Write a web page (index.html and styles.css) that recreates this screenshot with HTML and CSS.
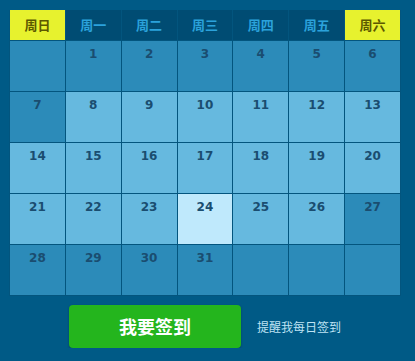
FILE: index.html
```html
<!DOCTYPE html>
<html lang="zh-CN">
<head>
  <meta charset="UTF-8">
  <title>每日签到</title>
  <link rel="stylesheet" href="styles.css">
</head>
<body>
  <div class="sign-panel">
    <table class="calendar">
      <thead>
        <tr>
          <th class="weekend">周日</th>
          <th>周一</th>
          <th>周二</th>
          <th>周三</th>
          <th>周四</th>
          <th>周五</th>
          <th class="weekend">周六</th>
        </tr>
      </thead>
      <tbody>
        <tr>
          <td></td>
          <td>1</td>
          <td>2</td>
          <td>3</td>
          <td>4</td>
          <td>5</td>
          <td>6</td>
        </tr>
        <tr>
          <td>7</td>
          <td class="signed">8</td>
          <td class="signed">9</td>
          <td class="signed">10</td>
          <td class="signed">11</td>
          <td class="signed">12</td>
          <td class="signed">13</td>
        </tr>
        <tr>
          <td class="signed">14</td>
          <td class="signed">15</td>
          <td class="signed">16</td>
          <td class="signed">17</td>
          <td class="signed">18</td>
          <td class="signed">19</td>
          <td class="signed">20</td>
        </tr>
        <tr>
          <td class="signed">21</td>
          <td class="signed">22</td>
          <td class="signed">23</td>
          <td class="today">24</td>
          <td class="signed">25</td>
          <td class="signed">26</td>
          <td>27</td>
        </tr>
        <tr>
          <td>28</td>
          <td>29</td>
          <td>30</td>
          <td>31</td>
          <td></td>
          <td></td>
          <td></td>
        </tr>
      </tbody>
    </table>

    <div class="sign-actions">
      <button type="button" class="sign-btn">我要签到</button>
      <a href="#" class="remind-link">提醒我每日签到</a>
    </div>
  </div>
</body>
</html>
```

FILE: styles.css
```css
* {
  box-sizing: border-box;
}

body {
  margin: 0;
  background: #005a86;
  font-family: "Noto Sans CJK SC", sans-serif;
}

.sign-panel {
  padding: 10px 0 0 9px;
}

.calendar {
  border-collapse: collapse;
  table-layout: fixed;
  width: 392px;
}

.calendar th,
.calendar td {
  border: 1px solid #03557e;
  padding: 0;
  text-align: center;
}

.calendar th {
  height: 30px;
  background: #004c73;
  color: #2ba2db;
  font-size: 13px;
  font-weight: 600;
  border-top: none;
}

.calendar th.weekend {
  background: #e7f22e;
  color: #5c5800;
}

.calendar td {
  height: 51px;
  vertical-align: top;
  padding-top: 5px;
  background: #2c8bb9;
  color: #1a4d70;
  font-family: "DejaVu Sans", sans-serif;
  font-size: 12px;
  font-weight: bold;
  line-height: 16px;
}

.calendar td.signed {
  background: #66b9df;
}

.calendar td.today {
  background: #bfe9fc;
}

.sign-actions {
  display: flex;
  align-items: center;
  padding: 9px 0 0 60px;
}

.sign-btn {
  width: 172px;
  height: 43px;
  background: #24b51d;
  color: #fff;
  border: none;
  border-radius: 4px;
  box-shadow: 0 1px 2px rgba(0, 40, 60, 0.5);
  font-family: "Noto Sans CJK SC", sans-serif;
  font-size: 18px;
  font-weight: bold;
  cursor: pointer;
}

.remind-link {
  margin-left: 16px;
  color: #bfe3f4;
  font-size: 12px;
  text-decoration: none;
}
```
